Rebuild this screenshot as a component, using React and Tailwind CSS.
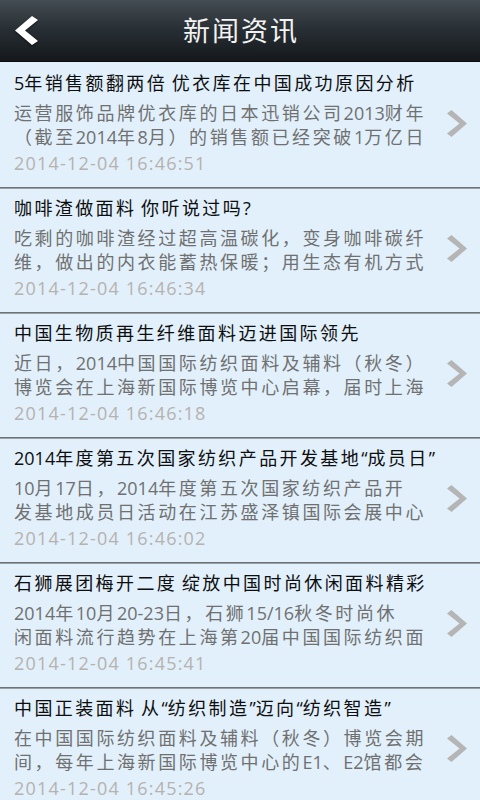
import React from 'react';

// News list screen ("新闻资讯") of an old Android app.

const NEWS = [
  {
    title: '5年销售额翻两倍 优衣库在中国成功原因分析',
    lines: ['运营服饰品牌优衣库的日本迅销公司2013财年', '（截至2014年8月）的销售额已经突破1万亿日'],
    date: '2014-12-04 16:46:51',
  },
  {
    title: '咖啡渣做面料 你听说过吗?',
    lines: ['吃剩的咖啡渣经过超高温碳化，变身咖啡碳纤', '维，做出的内衣能蓄热保暖；用生态有机方式'],
    date: '2014-12-04 16:46:34',
  },
  {
    title: '中国生物质再生纤维面料迈进国际领先',
    lines: ['近日，2014中国国际纺织面料及辅料（秋冬）', '博览会在上海新国际博览中心启幕，届时上海'],
    date: '2014-12-04 16:46:18',
  },
  {
    title: '2014年度第五次国家纺织产品开发基地“成员日”',
    lines: ['10月17日，2014年度第五次国家纺织产品开', '发基地成员日活动在江苏盛泽镇国际会展中心'],
    date: '2014-12-04 16:46:02',
  },
  {
    title: '石狮展团梅开二度 绽放中国时尚休闲面料精彩',
    lines: ['2014年10月20-23日，石狮15/16秋冬时尚休', '闲面料流行趋势在上海第20届中国国际纺织面'],
    date: '2014-12-04 16:45:41',
  },
  {
    title: '中国正装面料 从“纺织制造”迈向“纺织智造”',
    lines: ['在中国国际纺织面料及辅料（秋冬）博览会期', '间，每年上海新国际博览中心的E1、E2馆都会'],
    date: '2014-12-04 16:45:26',
  },
];

// CJK glyphs on the old device are wider than their size, so give
// the CJK runs a little tracking and leave latin runs as they are.
const CJK = /([\u3000-\u303f\u3400-\u9fff\uff00-\uffef]+)/;

const Mixed = ({ text, cjkClass }) =>
  text.split(CJK).map((part, i) =>
    i % 2 === 1 ? (
      <span key={i} className={cjkClass}>
        {part}
      </span>
    ) : (
      <React.Fragment key={i}>{part}</React.Fragment>
    )
  );

const BackIcon = (props) => (
  <svg {...props} width="24" height="30" viewBox="0 0 24 30">
    <polygon points="17,0 23,4 10,14.5 23,25 17,29 0,14.5" fill="#ffffff" />
  </svg>
);

const ChevronIcon = (props) => (
  <svg {...props} width="20" height="27" viewBox="0 0 20 27">
    <polygon points="0,3.5 4.5,0 20,13.5 4.5,27 0,23.5 12.5,13.5" fill="#b5b5b5" />
  </svg>
);

function NewsRow({ item }) {
  return (
    <div>
      <div className="h-[123px] pt-[5px] pl-[14px] pr-[13px]">
        <div className="h-[28px] leading-[28px] text-[#0e0e0e] whitespace-nowrap overflow-hidden">
          <Mixed text={item.title} cjkClass="tracking-[2.4px]" />
        </div>
        <div className="flex items-center mt-[4px]">
          <div className="flex-1 min-w-0 text-[#707070]">
            {item.lines.map((line, i) => (
              <div key={i} className="h-[24px] leading-[24px] whitespace-nowrap overflow-hidden">
                <Mixed text={line} cjkClass="tracking-[2.6px]" />
              </div>
            ))}
          </div>
          <ChevronIcon className="shrink-0 ml-[6px] mb-[3px]" />
        </div>
        <div className="mt-[1px] h-[26px] leading-[26px] text-[#b6b2ae] tracking-[1.2px]">{item.date}</div>
      </div>
      <div className="h-[2px] border-t border-[#6c747a] bg-[#98a0a6]" />
    </div>
  );
}

export default function App() {
  return (
    <div className="h-screen w-full overflow-hidden bg-[#e2f0fc] font-['Open_Sans','Noto_Sans_CJK_SC',sans-serif] text-[18px]">
      {/* Header bar */}
      <div className="grid grid-cols-[60px_1fr_60px] items-center h-[62px] bg-gradient-to-b from-[#444d53] via-[#272e33] to-[#14181b] border-b border-[#0a0c0e]">
        <div className="pl-[15px] pt-[1px]">
          <BackIcon className="drop-shadow-[0_1px_1px_rgba(0,0,0,0.6)]" />
        </div>
        <div className="text-center text-[27px] tracking-[2px] text-[#f3f3f3] leading-[30px] pl-[2px]">新闻资讯</div>
        <div />
      </div>

      <div className="h-[2px]" />

      {NEWS.map((item, i) => (
        <NewsRow key={i} item={item} />
      ))}
    </div>
  );
}
